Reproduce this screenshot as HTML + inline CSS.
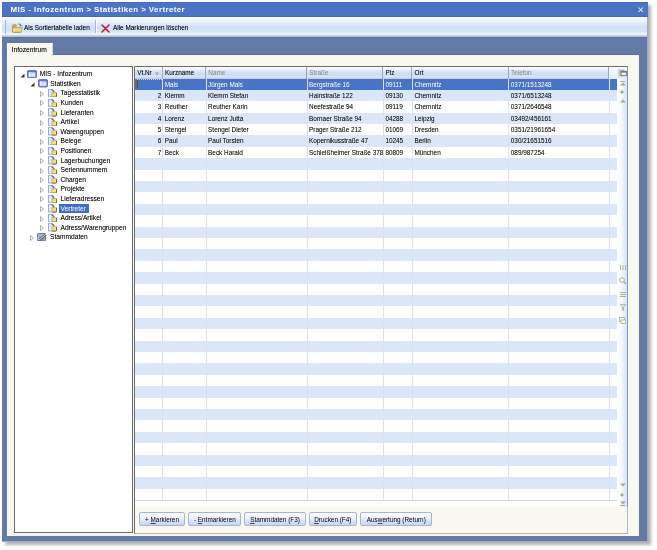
<!DOCTYPE html>
<html><head><meta charset="utf-8"><title>MIS</title>
<style>
*{box-sizing:border-box;margin:0;padding:0}
html,body{width:657px;height:550px;overflow:hidden;background:#fff}
body{position:relative;font-family:"Liberation Sans",sans-serif;font-size:6.4px;color:#000}
#L{position:absolute;left:0;top:0;width:657px;height:550px;will-change:transform}
.t{text-shadow:0 0 0.2px rgba(0,0,0,.3)}
.t.w{text-shadow:none}
.t.g{text-shadow:none}
.a{position:absolute}
.t{position:absolute;white-space:nowrap;line-height:10px}
#win{left:2px;top:2px;width:646px;height:540px;background:#627aa5;border-right:1px solid #9aaccb;border-bottom:1px solid #9aaccb;box-shadow:3px 3px 3px 0px rgba(60,60,60,.4)}
#title{left:2px;top:2px;width:646px;height:15px;background:linear-gradient(#3f66b4 0,#4a74c6 1.2px,#4a74c6 13.5px,#3e64b0 15px)}
#tbar{left:2px;top:17px;width:645px;height:20.3px;background:linear-gradient(#ffffff 0px,#f3f8fe 2px,#e6f0fc 5px,#cfe0f8 10px,#d6e5f9 15px,#f2f8fe 17.3px,#bccbda 18.8px,#b2c1d2 19.6px,#5b6f99 20.3px)}
#tab{left:7px;top:43px;width:46px;height:13px;background:#f8f8f0;border-top:1px solid #fff;border-left:1px solid #fff;border-right:1px solid #c9d3e6}
#panel{left:7px;top:55px;width:632px;height:481px;background:#f7f8f0;border-left:1px solid #fbfdff}
#tree{left:14px;top:66px;width:119px;height:467px;background:#fff;border:1px solid #6b6b6b}
#grid{left:134px;top:66px;width:494px;height:468px;background:#f8f8f0;border-left:1px solid #6b6b6b;border-top:1px solid #6b6b6b;border-right:1px solid #a9b8d2;border-bottom:1px solid #b5b5b5}
.hdr{position:absolute;top:67px;height:12px;background:linear-gradient(#ffffff 0px,#eef5fe 2px,#d2e2f8 5px,#c9dcf6 8px,#dbe7f8 9.5px,#f4f8fe 10px,#aebdd4 11px,#d6e4f8 12px);border-right:1px solid #9eabbf}
.row{position:absolute;left:135px;width:482px}
.vl{position:absolute;top:78px;width:1px;background:#d8e2f4}
.btn{position:absolute;top:512.2px;height:14.3px;border:1px solid #a3b6d3;border-radius:2px;background:linear-gradient(#ffffff 0%,#eef4fd 35%,#d6e4f8 70%,#c2d5f2 100%);text-align:center;line-height:14.3px;color:#000}
.btn u{text-decoration:underline;text-decoration-thickness:0.7px;text-underline-offset:0.8px;text-decoration-color:#444}
</style></head><body><div id="L">
<div id="win" class="a"></div>
<div id="title" class="a"></div>
<div class="t w" style="left:10.5px;top:4px;font-weight:bold;font-size:7.9px;letter-spacing:0.42px;color:#fff;line-height:11px">MIS - Infozentrum &gt; Statistiken &gt; Vertreter</div>
<svg class="a" style="left:638px;top:6.8px" width="6" height="6" viewBox="0 0 6 6"><path d="M0.5 0.5 L5 5 M5 0.5 L0.5 5" stroke="#eef4ff" stroke-width="1.05"/></svg>
<div id="tbar" class="a"></div>

<div class="a" style="left:5px;top:20px;width:1px;height:14px;background:#a9b9d4"></div>
<svg class="a" style="left:11.5px;top:22.5px" width="11" height="10" viewBox="0 0 11 10"><path d="M0.6 2.5 Q0.6 1.8 1.3 1.8 H4 L4.8 2.6 H8.5 V9.2 H1.3 Q0.6 9.2 0.6 8.5 Z" fill="#d9b548" stroke="#8c7a3a" stroke-width="0.6"/><path d="M3.5 3.2 L6 1.5 L7.5 0.4 L9.8 2.6 L9.8 5 L6 5 Z" fill="#eef0f2" stroke="#7e8488" stroke-width="0.5"/><path d="M7.5 0.4 L9.8 2.6 L7.5 3.4 Z" fill="#5e6a6e"/><path d="M0.8 4.6 H9.6 Q10.2 4.6 10 5.2 L9.2 9.2 H1.2 Q0.6 9.2 0.6 8.5 Z" fill="#f1d77a" stroke="#9a8540" stroke-width="0.6"/><rect x="1.5" y="5.3" width="1.2" height="3.3" fill="#fff2b0" opacity=".8"/></svg>
<div class="t" style="left:24px;top:23px">Als Sortiertabelle laden</div>
<div class="a" style="left:95px;top:20px;width:1px;height:13px;background:#a7b7d0"></div>
<div class="a" style="left:96px;top:20px;width:1px;height:13px;background:#fff"></div>
<svg class="a" style="left:101px;top:24px" width="9" height="9" viewBox="0 0 9 9"><path d="M1 1 L8 8 M8 1 L1 8" stroke="#c41e3a" stroke-width="1.6" stroke-linecap="round"/></svg>
<div class="t" style="left:113px;top:23px">Alle Markierungen löschen</div>
<div class="a" style="left:2px;top:37.3px;width:645px;height:1px;background:#5f7299"></div>
<div class="a" style="left:7px;top:54px;width:632px;height:1px;background:#5b6e98"></div>
<div id="panel" class="a"></div>
<div id="tab" class="a"></div>
<div class="t" style="left:11.7px;top:44.6px;font-size:6.65px">Infozentrum</div>
<div id="tree" class="a"></div>
<svg class="a" style="left:20px;top:72.5px" width="5" height="5" viewBox="0 0 5 5"><path d="M4.5 0.5 L4.5 4.5 L0.5 4.5 Z" fill="#333"/></svg>
<svg class="a" style="left:27px;top:69.8px" width="10" height="8.5" viewBox="0 0 10 8.5"><defs><linearGradient id="rg0" x1="0" y1="0" x2="0" y2="1"><stop offset="0" stop-color="#5a6fd0"/><stop offset="1" stop-color="#7f9be0"/></linearGradient></defs><rect x="0.4" y="0.4" width="9.2" height="7.6" rx="1.6" fill="url(#rg0)" stroke="#4a5ea8" stroke-width="0.8"/><rect x="1.6" y="2.2" width="6.8" height="4.6" rx="0.6" fill="#c8d8f6"/><path d="M2.6 2.4 V6 H4.2" stroke="#fff" stroke-width="1" fill="none"/><path d="M5 4.6 Q6.5 3.4 8 4.2 V6.4 H5 Z" fill="#e6eefc"/></svg>
<div class="t" style="left:39.7px;top:69.1px;font-size:6.62px">MIS - Infozentrum</div>
<svg class="a" style="left:30.3px;top:82.1px" width="5" height="5" viewBox="0 0 5 5"><path d="M4.5 0.5 L4.5 4.5 L0.5 4.5 Z" fill="#333"/></svg>
<svg class="a" style="left:37.5px;top:79.4px" width="10" height="8.5" viewBox="0 0 10 8.5"><defs><linearGradient id="rg1" x1="0" y1="0" x2="0" y2="1"><stop offset="0" stop-color="#5a6fd0"/><stop offset="1" stop-color="#7f9be0"/></linearGradient></defs><rect x="0.4" y="0.4" width="9.2" height="7.6" rx="1.6" fill="url(#rg1)" stroke="#4a5ea8" stroke-width="0.8"/><rect x="1.6" y="2.2" width="6.8" height="4.6" rx="0.6" fill="#c8d8f6"/><path d="M2.6 2.4 V6 H4.2" stroke="#fff" stroke-width="1" fill="none"/><path d="M5 4.6 Q6.5 3.4 8 4.2 V6.4 H5 Z" fill="#e6eefc"/></svg>
<div class="t" style="left:50.2px;top:78.7px;font-size:6.62px">Statistiken</div>
<svg class="a" style="left:40.2px;top:90.7px" width="4" height="6" viewBox="0 0 4 6"><path d="M0.5 0.5 L3.5 3 L0.5 5.5 Z" fill="#fff" stroke="#9a9a9a" stroke-width="0.8"/></svg>
<svg class="a" style="left:48px;top:88.9px" width="9" height="8.5" viewBox="0 0 9 8.5"><path d="M0.5 0.4 H4 L6 2.4 V8 H0.5 Z" fill="#e4edfb" stroke="#8798c2" stroke-width="0.8"/><path d="M3.7 0.5 L6.1 2.9" stroke="#4d5b78" stroke-width="1.1"/><path d="M3.9 3.6 H8.5 V7.4 Q8.5 8.1 7.8 8.1 H3.9 Z" fill="#f1df88" stroke="#a8943e" stroke-width="0.6"/><path d="M8.5 4 V7.5 Q8.5 8.1 7.9 8.1 H4.6" stroke="#6a5c22" stroke-width="0.8" fill="none"/></svg>
<div class="t" style="left:60.5px;top:88.3px;font-size:6.62px">Tagesstatistik</div>
<svg class="a" style="left:40.2px;top:100.3px" width="4" height="6" viewBox="0 0 4 6"><path d="M0.5 0.5 L3.5 3 L0.5 5.5 Z" fill="#fff" stroke="#9a9a9a" stroke-width="0.8"/></svg>
<svg class="a" style="left:48px;top:98.5px" width="9" height="8.5" viewBox="0 0 9 8.5"><path d="M0.5 0.4 H4 L6 2.4 V8 H0.5 Z" fill="#e4edfb" stroke="#8798c2" stroke-width="0.8"/><path d="M3.7 0.5 L6.1 2.9" stroke="#4d5b78" stroke-width="1.1"/><path d="M3.9 3.6 H8.5 V7.4 Q8.5 8.1 7.8 8.1 H3.9 Z" fill="#f1df88" stroke="#a8943e" stroke-width="0.6"/><path d="M8.5 4 V7.5 Q8.5 8.1 7.9 8.1 H4.6" stroke="#6a5c22" stroke-width="0.8" fill="none"/></svg>
<div class="t" style="left:60.5px;top:97.9px;font-size:6.62px">Kunden</div>
<svg class="a" style="left:40.2px;top:109.9px" width="4" height="6" viewBox="0 0 4 6"><path d="M0.5 0.5 L3.5 3 L0.5 5.5 Z" fill="#fff" stroke="#9a9a9a" stroke-width="0.8"/></svg>
<svg class="a" style="left:48px;top:108.1px" width="9" height="8.5" viewBox="0 0 9 8.5"><path d="M0.5 0.4 H4 L6 2.4 V8 H0.5 Z" fill="#e4edfb" stroke="#8798c2" stroke-width="0.8"/><path d="M3.7 0.5 L6.1 2.9" stroke="#4d5b78" stroke-width="1.1"/><path d="M3.9 3.6 H8.5 V7.4 Q8.5 8.1 7.8 8.1 H3.9 Z" fill="#f1df88" stroke="#a8943e" stroke-width="0.6"/><path d="M8.5 4 V7.5 Q8.5 8.1 7.9 8.1 H4.6" stroke="#6a5c22" stroke-width="0.8" fill="none"/></svg>
<div class="t" style="left:60.5px;top:107.5px;font-size:6.62px">Lieferanten</div>
<svg class="a" style="left:40.2px;top:119.5px" width="4" height="6" viewBox="0 0 4 6"><path d="M0.5 0.5 L3.5 3 L0.5 5.5 Z" fill="#fff" stroke="#9a9a9a" stroke-width="0.8"/></svg>
<svg class="a" style="left:48px;top:117.7px" width="9" height="8.5" viewBox="0 0 9 8.5"><path d="M0.5 0.4 H4 L6 2.4 V8 H0.5 Z" fill="#e4edfb" stroke="#8798c2" stroke-width="0.8"/><path d="M3.7 0.5 L6.1 2.9" stroke="#4d5b78" stroke-width="1.1"/><path d="M3.9 3.6 H8.5 V7.4 Q8.5 8.1 7.8 8.1 H3.9 Z" fill="#f1df88" stroke="#a8943e" stroke-width="0.6"/><path d="M8.5 4 V7.5 Q8.5 8.1 7.9 8.1 H4.6" stroke="#6a5c22" stroke-width="0.8" fill="none"/></svg>
<div class="t" style="left:60.5px;top:117.1px;font-size:6.62px">Artikel</div>
<svg class="a" style="left:40.2px;top:129.1px" width="4" height="6" viewBox="0 0 4 6"><path d="M0.5 0.5 L3.5 3 L0.5 5.5 Z" fill="#fff" stroke="#9a9a9a" stroke-width="0.8"/></svg>
<svg class="a" style="left:48px;top:127.3px" width="9" height="8.5" viewBox="0 0 9 8.5"><path d="M0.5 0.4 H4 L6 2.4 V8 H0.5 Z" fill="#e4edfb" stroke="#8798c2" stroke-width="0.8"/><path d="M3.7 0.5 L6.1 2.9" stroke="#4d5b78" stroke-width="1.1"/><path d="M3.9 3.6 H8.5 V7.4 Q8.5 8.1 7.8 8.1 H3.9 Z" fill="#f1df88" stroke="#a8943e" stroke-width="0.6"/><path d="M8.5 4 V7.5 Q8.5 8.1 7.9 8.1 H4.6" stroke="#6a5c22" stroke-width="0.8" fill="none"/></svg>
<div class="t" style="left:60.5px;top:126.7px;font-size:6.62px">Warengruppen</div>
<svg class="a" style="left:40.2px;top:138.7px" width="4" height="6" viewBox="0 0 4 6"><path d="M0.5 0.5 L3.5 3 L0.5 5.5 Z" fill="#fff" stroke="#9a9a9a" stroke-width="0.8"/></svg>
<svg class="a" style="left:48px;top:136.9px" width="9" height="8.5" viewBox="0 0 9 8.5"><path d="M0.5 0.4 H4 L6 2.4 V8 H0.5 Z" fill="#e4edfb" stroke="#8798c2" stroke-width="0.8"/><path d="M3.7 0.5 L6.1 2.9" stroke="#4d5b78" stroke-width="1.1"/><path d="M3.9 3.6 H8.5 V7.4 Q8.5 8.1 7.8 8.1 H3.9 Z" fill="#f1df88" stroke="#a8943e" stroke-width="0.6"/><path d="M8.5 4 V7.5 Q8.5 8.1 7.9 8.1 H4.6" stroke="#6a5c22" stroke-width="0.8" fill="none"/></svg>
<div class="t" style="left:60.5px;top:136.3px;font-size:6.62px">Belege</div>
<svg class="a" style="left:40.2px;top:148.3px" width="4" height="6" viewBox="0 0 4 6"><path d="M0.5 0.5 L3.5 3 L0.5 5.5 Z" fill="#fff" stroke="#9a9a9a" stroke-width="0.8"/></svg>
<svg class="a" style="left:48px;top:146.5px" width="9" height="8.5" viewBox="0 0 9 8.5"><path d="M0.5 0.4 H4 L6 2.4 V8 H0.5 Z" fill="#e4edfb" stroke="#8798c2" stroke-width="0.8"/><path d="M3.7 0.5 L6.1 2.9" stroke="#4d5b78" stroke-width="1.1"/><path d="M3.9 3.6 H8.5 V7.4 Q8.5 8.1 7.8 8.1 H3.9 Z" fill="#f1df88" stroke="#a8943e" stroke-width="0.6"/><path d="M8.5 4 V7.5 Q8.5 8.1 7.9 8.1 H4.6" stroke="#6a5c22" stroke-width="0.8" fill="none"/></svg>
<div class="t" style="left:60.5px;top:145.9px;font-size:6.62px">Positionen</div>
<svg class="a" style="left:40.2px;top:157.9px" width="4" height="6" viewBox="0 0 4 6"><path d="M0.5 0.5 L3.5 3 L0.5 5.5 Z" fill="#fff" stroke="#9a9a9a" stroke-width="0.8"/></svg>
<svg class="a" style="left:48px;top:156.1px" width="9" height="8.5" viewBox="0 0 9 8.5"><path d="M0.5 0.4 H4 L6 2.4 V8 H0.5 Z" fill="#e4edfb" stroke="#8798c2" stroke-width="0.8"/><path d="M3.7 0.5 L6.1 2.9" stroke="#4d5b78" stroke-width="1.1"/><path d="M3.9 3.6 H8.5 V7.4 Q8.5 8.1 7.8 8.1 H3.9 Z" fill="#f1df88" stroke="#a8943e" stroke-width="0.6"/><path d="M8.5 4 V7.5 Q8.5 8.1 7.9 8.1 H4.6" stroke="#6a5c22" stroke-width="0.8" fill="none"/></svg>
<div class="t" style="left:60.5px;top:155.5px;font-size:6.62px">Lagerbuchungen</div>
<svg class="a" style="left:40.2px;top:167.5px" width="4" height="6" viewBox="0 0 4 6"><path d="M0.5 0.5 L3.5 3 L0.5 5.5 Z" fill="#fff" stroke="#9a9a9a" stroke-width="0.8"/></svg>
<svg class="a" style="left:48px;top:165.7px" width="9" height="8.5" viewBox="0 0 9 8.5"><path d="M0.5 0.4 H4 L6 2.4 V8 H0.5 Z" fill="#e4edfb" stroke="#8798c2" stroke-width="0.8"/><path d="M3.7 0.5 L6.1 2.9" stroke="#4d5b78" stroke-width="1.1"/><path d="M3.9 3.6 H8.5 V7.4 Q8.5 8.1 7.8 8.1 H3.9 Z" fill="#f1df88" stroke="#a8943e" stroke-width="0.6"/><path d="M8.5 4 V7.5 Q8.5 8.1 7.9 8.1 H4.6" stroke="#6a5c22" stroke-width="0.8" fill="none"/></svg>
<div class="t" style="left:60.5px;top:165.1px;font-size:6.62px">Seriennummern</div>
<svg class="a" style="left:40.2px;top:177.1px" width="4" height="6" viewBox="0 0 4 6"><path d="M0.5 0.5 L3.5 3 L0.5 5.5 Z" fill="#fff" stroke="#9a9a9a" stroke-width="0.8"/></svg>
<svg class="a" style="left:48px;top:175.3px" width="9" height="8.5" viewBox="0 0 9 8.5"><path d="M0.5 0.4 H4 L6 2.4 V8 H0.5 Z" fill="#e4edfb" stroke="#8798c2" stroke-width="0.8"/><path d="M3.7 0.5 L6.1 2.9" stroke="#4d5b78" stroke-width="1.1"/><path d="M3.9 3.6 H8.5 V7.4 Q8.5 8.1 7.8 8.1 H3.9 Z" fill="#f1df88" stroke="#a8943e" stroke-width="0.6"/><path d="M8.5 4 V7.5 Q8.5 8.1 7.9 8.1 H4.6" stroke="#6a5c22" stroke-width="0.8" fill="none"/></svg>
<div class="t" style="left:60.5px;top:174.7px;font-size:6.62px">Chargen</div>
<svg class="a" style="left:40.2px;top:186.7px" width="4" height="6" viewBox="0 0 4 6"><path d="M0.5 0.5 L3.5 3 L0.5 5.5 Z" fill="#fff" stroke="#9a9a9a" stroke-width="0.8"/></svg>
<svg class="a" style="left:48px;top:184.9px" width="9" height="8.5" viewBox="0 0 9 8.5"><path d="M0.5 0.4 H4 L6 2.4 V8 H0.5 Z" fill="#e4edfb" stroke="#8798c2" stroke-width="0.8"/><path d="M3.7 0.5 L6.1 2.9" stroke="#4d5b78" stroke-width="1.1"/><path d="M3.9 3.6 H8.5 V7.4 Q8.5 8.1 7.8 8.1 H3.9 Z" fill="#f1df88" stroke="#a8943e" stroke-width="0.6"/><path d="M8.5 4 V7.5 Q8.5 8.1 7.9 8.1 H4.6" stroke="#6a5c22" stroke-width="0.8" fill="none"/></svg>
<div class="t" style="left:60.5px;top:184.3px;font-size:6.62px">Projekte</div>
<svg class="a" style="left:40.2px;top:196.3px" width="4" height="6" viewBox="0 0 4 6"><path d="M0.5 0.5 L3.5 3 L0.5 5.5 Z" fill="#fff" stroke="#9a9a9a" stroke-width="0.8"/></svg>
<svg class="a" style="left:48px;top:194.5px" width="9" height="8.5" viewBox="0 0 9 8.5"><path d="M0.5 0.4 H4 L6 2.4 V8 H0.5 Z" fill="#e4edfb" stroke="#8798c2" stroke-width="0.8"/><path d="M3.7 0.5 L6.1 2.9" stroke="#4d5b78" stroke-width="1.1"/><path d="M3.9 3.6 H8.5 V7.4 Q8.5 8.1 7.8 8.1 H3.9 Z" fill="#f1df88" stroke="#a8943e" stroke-width="0.6"/><path d="M8.5 4 V7.5 Q8.5 8.1 7.9 8.1 H4.6" stroke="#6a5c22" stroke-width="0.8" fill="none"/></svg>
<div class="t" style="left:60.5px;top:193.9px;font-size:6.62px">Lieferadressen</div>
<svg class="a" style="left:40.2px;top:205.9px" width="4" height="6" viewBox="0 0 4 6"><path d="M0.5 0.5 L3.5 3 L0.5 5.5 Z" fill="#fff" stroke="#9a9a9a" stroke-width="0.8"/></svg>
<svg class="a" style="left:48px;top:204.1px" width="9" height="8.5" viewBox="0 0 9 8.5"><path d="M0.5 0.4 H4 L6 2.4 V8 H0.5 Z" fill="#e4edfb" stroke="#8798c2" stroke-width="0.8"/><path d="M3.7 0.5 L6.1 2.9" stroke="#4d5b78" stroke-width="1.1"/><path d="M3.9 3.6 H8.5 V7.4 Q8.5 8.1 7.8 8.1 H3.9 Z" fill="#f1df88" stroke="#a8943e" stroke-width="0.6"/><path d="M8.5 4 V7.5 Q8.5 8.1 7.9 8.1 H4.6" stroke="#6a5c22" stroke-width="0.8" fill="none"/></svg>
<div class="a" style="left:58.9px;top:204.3px;width:30px;height:8.5px;background:#3e6cc6"></div>
<div class="t w" style="left:60.5px;top:203.5px;color:#fff;font-size:6.62px">Vertreter</div>
<svg class="a" style="left:40.2px;top:215.5px" width="4" height="6" viewBox="0 0 4 6"><path d="M0.5 0.5 L3.5 3 L0.5 5.5 Z" fill="#fff" stroke="#9a9a9a" stroke-width="0.8"/></svg>
<svg class="a" style="left:48px;top:213.7px" width="9" height="8.5" viewBox="0 0 9 8.5"><path d="M0.5 0.4 H4 L6 2.4 V8 H0.5 Z" fill="#e4edfb" stroke="#8798c2" stroke-width="0.8"/><path d="M3.7 0.5 L6.1 2.9" stroke="#4d5b78" stroke-width="1.1"/><path d="M3.9 3.6 H8.5 V7.4 Q8.5 8.1 7.8 8.1 H3.9 Z" fill="#f1df88" stroke="#a8943e" stroke-width="0.6"/><path d="M8.5 4 V7.5 Q8.5 8.1 7.9 8.1 H4.6" stroke="#6a5c22" stroke-width="0.8" fill="none"/></svg>
<div class="t" style="left:60.5px;top:213.1px;font-size:6.62px">Adress/Artikel</div>
<svg class="a" style="left:40.2px;top:225.1px" width="4" height="6" viewBox="0 0 4 6"><path d="M0.5 0.5 L3.5 3 L0.5 5.5 Z" fill="#fff" stroke="#9a9a9a" stroke-width="0.8"/></svg>
<svg class="a" style="left:48px;top:223.3px" width="9" height="8.5" viewBox="0 0 9 8.5"><path d="M0.5 0.4 H4 L6 2.4 V8 H0.5 Z" fill="#e4edfb" stroke="#8798c2" stroke-width="0.8"/><path d="M3.7 0.5 L6.1 2.9" stroke="#4d5b78" stroke-width="1.1"/><path d="M3.9 3.6 H8.5 V7.4 Q8.5 8.1 7.8 8.1 H3.9 Z" fill="#f1df88" stroke="#a8943e" stroke-width="0.6"/><path d="M8.5 4 V7.5 Q8.5 8.1 7.9 8.1 H4.6" stroke="#6a5c22" stroke-width="0.8" fill="none"/></svg>
<div class="t" style="left:60.5px;top:222.7px;font-size:6.62px">Adress/Warengruppen</div>
<svg class="a" style="left:30px;top:234.7px" width="4" height="6" viewBox="0 0 4 6"><path d="M0.5 0.5 L3.5 3 L0.5 5.5 Z" fill="#fff" stroke="#9a9a9a" stroke-width="0.8"/></svg>
<svg class="a" style="left:37.3px;top:232.8px" width="10" height="8.5" viewBox="0 0 10 8.5"><rect x="0.4" y="0.4" width="8.2" height="7.6" rx="1.2" fill="#8a98dc" stroke="#4e5a90" stroke-width="0.8"/><rect x="1.3" y="1.3" width="6" height="2.5" fill="#a9b6ee"/><path d="M2 7.2 L8.8 1.2" stroke="#3a3a30" stroke-width="2.2"/><path d="M2 7.2 L8.8 1.2" stroke="#d8d890" stroke-width="1.1"/><path d="M1.2 4 V7" stroke="#e8eefc" stroke-width="0.9"/></svg>
<div class="t" style="left:50.1px;top:232.3px;font-size:6.62px">Stammdaten</div>
<div id="grid" class="a"></div>
<div class="row" style="top:78.9px;height:10.8px;background:#4773c9"></div>
<div class="row" style="top:89.7px;height:11.42px;background:#dbe7f9"></div>
<div class="row" style="top:101.1px;height:11.42px;background:#ffffff"></div>
<div class="row" style="top:112.5px;height:11.42px;background:#dbe7f9"></div>
<div class="row" style="top:123.9px;height:11.42px;background:#ffffff"></div>
<div class="row" style="top:135.3px;height:11.42px;background:#dbe7f9"></div>
<div class="row" style="top:146.7px;height:11.42px;background:#ffffff"></div>
<div class="row" style="top:158.1px;height:11.42px;background:#dbe7f9"></div>
<div class="row" style="top:169.5px;height:11.42px;background:#ffffff"></div>
<div class="row" style="top:180.9px;height:11.42px;background:#dbe7f9"></div>
<div class="row" style="top:192.3px;height:11.42px;background:#ffffff"></div>
<div class="row" style="top:203.7px;height:11.42px;background:#dbe7f9"></div>
<div class="row" style="top:215.1px;height:11.42px;background:#ffffff"></div>
<div class="row" style="top:226.5px;height:11.42px;background:#dbe7f9"></div>
<div class="row" style="top:237.9px;height:11.42px;background:#ffffff"></div>
<div class="row" style="top:249.3px;height:11.42px;background:#dbe7f9"></div>
<div class="row" style="top:260.7px;height:11.42px;background:#ffffff"></div>
<div class="row" style="top:272.1px;height:11.42px;background:#dbe7f9"></div>
<div class="row" style="top:283.5px;height:11.42px;background:#ffffff"></div>
<div class="row" style="top:294.9px;height:11.42px;background:#dbe7f9"></div>
<div class="row" style="top:306.3px;height:11.42px;background:#ffffff"></div>
<div class="row" style="top:317.7px;height:11.42px;background:#dbe7f9"></div>
<div class="row" style="top:329.1px;height:11.42px;background:#ffffff"></div>
<div class="row" style="top:340.5px;height:11.42px;background:#dbe7f9"></div>
<div class="row" style="top:351.9px;height:11.42px;background:#ffffff"></div>
<div class="row" style="top:363.3px;height:11.42px;background:#dbe7f9"></div>
<div class="row" style="top:374.7px;height:11.42px;background:#ffffff"></div>
<div class="row" style="top:386.1px;height:11.42px;background:#dbe7f9"></div>
<div class="row" style="top:397.5px;height:11.42px;background:#ffffff"></div>
<div class="row" style="top:408.9px;height:11.42px;background:#dbe7f9"></div>
<div class="row" style="top:420.3px;height:11.42px;background:#ffffff"></div>
<div class="row" style="top:431.7px;height:11.42px;background:#dbe7f9"></div>
<div class="row" style="top:443.1px;height:11.42px;background:#ffffff"></div>
<div class="row" style="top:454.5px;height:11.42px;background:#dbe7f9"></div>
<div class="row" style="top:465.9px;height:11.42px;background:#ffffff"></div>
<div class="row" style="top:477.3px;height:11.42px;background:#dbe7f9"></div>
<div class="row" style="top:488.7px;height:11.42px;background:#ffffff"></div>
<div class="vl" style="left:162.3px;height:422.1px"></div>
<div class="vl" style="left:205.6px;height:422.1px"></div>
<div class="vl" style="left:306.6px;height:422.1px"></div>
<div class="vl" style="left:382.9px;height:422.1px"></div>
<div class="vl" style="left:411.9px;height:422.1px"></div>
<div class="vl" style="left:508.3px;height:422.1px"></div>
<div class="vl" style="left:608.5px;height:422.1px"></div>
<div class="a" style="left:617px;top:67px;width:10px;height:440px;background:linear-gradient(90deg,#fdfeff 0%,#f6f9fe 40%,#d4e2f6 100%)"></div>
<div class="a" style="left:626.5px;top:67px;width:1px;height:440px;background:#8098c0"></div>
<div class="hdr" style="left:135px;width:27.8px"></div>
<div class="t" style="left:137.2px;top:67.7px;color:#111">Vt.Nr</div>
<div class="hdr" style="left:162.8px;width:43.3px"></div>
<div class="t" style="left:165px;top:67.7px;color:#111">Kurzname</div>
<div class="hdr" style="left:206.1px;width:101px"></div>
<div class="t g" style="left:208.3px;top:67.7px;color:#888">Name</div>
<div class="hdr" style="left:307.1px;width:76.3px"></div>
<div class="t g" style="left:309.3px;top:67.7px;color:#888">Straße</div>
<div class="hdr" style="left:383.4px;width:29px"></div>
<div class="t" style="left:385.6px;top:67.7px;color:#111">Plz</div>
<div class="hdr" style="left:412.4px;width:96.4px"></div>
<div class="t" style="left:414.6px;top:67.7px;color:#111">Ort</div>
<div class="hdr" style="left:508.8px;width:100.2px"></div>
<div class="t g" style="left:511px;top:67.7px;color:#888">Telefon</div>
<div class="hdr" style="left:609px;width:17.5px;border-right:none;background:linear-gradient(#fbfdff,#e2ebf8)"></div>
<svg class="a" style="left:154.5px;top:71.5px" width="4" height="4" viewBox="0 0 4 4"><path d="M0 0.5 H4 L2 3.5 Z" fill="#9aa6b8"/></svg>
<svg class="a" style="left:617.5px;top:69px" width="9" height="8" viewBox="0 0 9 8"><rect x="0.3" y="0.3" width="6" height="7" fill="#c4c8ce"/><rect x="3" y="2.3" width="5.6" height="4.4" fill="#f4f0ee" stroke="#6e737a" stroke-width="0.9"/><rect x="3" y="2.3" width="5.6" height="1.3" fill="#6e737a"/></svg>
<div class="a" style="left:137px;top:79.2px;width:25px;height:1px;border-top:1px dotted #c9d6f0"></div>
<div class="a" style="left:136px;top:80px;width:2px;height:8px;background:linear-gradient(90deg,#8a7a40,#4a4020)"></div>
<div class="t w" style="left:164.8px;top:79.9px;color:#fff">Mals</div>
<div class="t w" style="left:208.1px;top:79.9px;color:#fff">Jürgen Mals</div>
<div class="t w" style="left:309.1px;top:79.9px;color:#fff">Bergstraße 16</div>
<div class="t w" style="left:385.4px;top:79.9px;color:#fff">09111</div>
<div class="t w" style="left:414.4px;top:79.9px;color:#fff">Chemnitz</div>
<div class="t w" style="left:510.8px;top:79.9px;color:#fff">0371/1513248</div>
<div class="t" style="left:135px;width:26.3px;text-align:right;top:90.7px;color:#111">2</div>
<div class="t" style="left:164.8px;top:90.7px;color:#111">Klemm</div>
<div class="t" style="left:208.1px;top:90.7px;color:#111">Klemm Stefan</div>
<div class="t" style="left:309.1px;top:90.7px;color:#111">Hainstraße 122</div>
<div class="t" style="left:385.4px;top:90.7px;color:#111">09130</div>
<div class="t" style="left:414.4px;top:90.7px;color:#111">Chemnitz</div>
<div class="t" style="left:510.8px;top:90.7px;color:#111">0371/6513248</div>
<div class="t" style="left:135px;width:26.3px;text-align:right;top:102.1px;color:#111">3</div>
<div class="t" style="left:164.8px;top:102.1px;color:#111">Reuther</div>
<div class="t" style="left:208.1px;top:102.1px;color:#111">Reuther Karin</div>
<div class="t" style="left:309.1px;top:102.1px;color:#111">Neefestraße 94</div>
<div class="t" style="left:385.4px;top:102.1px;color:#111">09119</div>
<div class="t" style="left:414.4px;top:102.1px;color:#111">Chemnitz</div>
<div class="t" style="left:510.8px;top:102.1px;color:#111">0371/2646548</div>
<div class="t" style="left:135px;width:26.3px;text-align:right;top:113.5px;color:#111">4</div>
<div class="t" style="left:164.8px;top:113.5px;color:#111">Lorenz</div>
<div class="t" style="left:208.1px;top:113.5px;color:#111">Lorenz Jutta</div>
<div class="t" style="left:309.1px;top:113.5px;color:#111">Bornaer Straße 94</div>
<div class="t" style="left:385.4px;top:113.5px;color:#111">04288</div>
<div class="t" style="left:414.4px;top:113.5px;color:#111">Leipzig</div>
<div class="t" style="left:510.8px;top:113.5px;color:#111">03492/456161</div>
<div class="t" style="left:135px;width:26.3px;text-align:right;top:124.9px;color:#111">5</div>
<div class="t" style="left:164.8px;top:124.9px;color:#111">Stengel</div>
<div class="t" style="left:208.1px;top:124.9px;color:#111">Stengel Dieter</div>
<div class="t" style="left:309.1px;top:124.9px;color:#111">Prager Straße 212</div>
<div class="t" style="left:385.4px;top:124.9px;color:#111">01069</div>
<div class="t" style="left:414.4px;top:124.9px;color:#111">Dresden</div>
<div class="t" style="left:510.8px;top:124.9px;color:#111">0351/21961654</div>
<div class="t" style="left:135px;width:26.3px;text-align:right;top:136.3px;color:#111">6</div>
<div class="t" style="left:164.8px;top:136.3px;color:#111">Paul</div>
<div class="t" style="left:208.1px;top:136.3px;color:#111">Paul Torsten</div>
<div class="t" style="left:309.1px;top:136.3px;color:#111">Kopernikusstraße 47</div>
<div class="t" style="left:385.4px;top:136.3px;color:#111">10245</div>
<div class="t" style="left:414.4px;top:136.3px;color:#111">Berlin</div>
<div class="t" style="left:510.8px;top:136.3px;color:#111">030/21651516</div>
<div class="t" style="left:135px;width:26.3px;text-align:right;top:147.7px;color:#111">7</div>
<div class="t" style="left:164.8px;top:147.7px;color:#111">Beck</div>
<div class="t" style="left:208.1px;top:147.7px;color:#111">Beck Harald</div>
<div class="t" style="left:309.1px;top:147.7px;color:#111">Schleißheimer Straße 378</div>
<div class="t" style="left:385.4px;top:147.7px;color:#111">80809</div>
<div class="t" style="left:414.4px;top:147.7px;color:#111">München</div>
<div class="t" style="left:510.8px;top:147.7px;color:#111">089/987254</div>
<div class="a" style="left:620px;top:81px;width:4.6px;height:1px;background:#a4ad88"></div>
<svg class="a" style="left:619.5px;top:82.2px" width="6" height="4" viewBox="0 0 6 4"><path d="M0 3.5 L3 0.5 L6 3.5 Z" fill="#a4ad88"/></svg>
<svg class="a" style="left:620.2px;top:90px" width="4" height="4" viewBox="0 0 4 4"><path d="M2 0 L4 2 L2 4 L0 2 Z" fill="#a4ad88"/></svg>
<svg class="a" style="left:619.5px;top:99.4px" width="6" height="4" viewBox="0 0 6 4"><path d="M0 3.5 L3 0.5 L6 3.5 Z" fill="#a4ad88"/></svg>
<svg class="a" style="left:619.5px;top:265px" width="6" height="5" viewBox="0 0 6 5"><path d="M0.5 0 V5 M3 0 V5 M5.5 0 V5" stroke="#a4ad88" stroke-width="0.9"/></svg>
<svg class="a" style="left:618.8px;top:277.3px" width="7.5" height="7.5" viewBox="0 0 7.5 7.5"><circle cx="3" cy="3" r="2.4" fill="#f4f6ee" stroke="#a4ad88" stroke-width="0.9"/><path d="M4.7 4.7 L7 7" stroke="#a4ad88" stroke-width="1.3"/></svg>
<svg class="a" style="left:619.5px;top:291.5px" width="6" height="5" viewBox="0 0 6 5"><path d="M0 0.5 H6 M0 2.5 H6 M0 4.5 H6" stroke="#a4ad88" stroke-width="0.9"/></svg>
<svg class="a" style="left:619.5px;top:304px" width="6" height="7" viewBox="0 0 6 7"><path d="M0 0.5 L6 0.5 L3.5 3 V6.5 L2.5 6 V3 Z" fill="none" stroke="#a4ad88" stroke-width="0.8"/></svg>
<svg class="a" style="left:619px;top:316.5px" width="7" height="7" viewBox="0 0 7 7"><rect x="0.5" y="0.5" width="5" height="4" fill="none" stroke="#a4ad88" stroke-width="0.8"/><rect x="2" y="3" width="4.5" height="3.5" fill="#fff" stroke="#a4ad88" stroke-width="0.8"/></svg>
<svg class="a" style="left:619.5px;top:483.3px" width="6" height="4" viewBox="0 0 6 4"><path d="M0 0.5 L3 3.5 L6 0.5 Z" fill="#a4ad88"/></svg>
<svg class="a" style="left:620.2px;top:492.6px" width="4" height="4" viewBox="0 0 4 4"><path d="M2 0 L4 2 L2 4 L0 2 Z" fill="#a4ad88"/></svg>
<svg class="a" style="left:619.5px;top:501.1px" width="6" height="4" viewBox="0 0 6 4"><path d="M0 0.5 L3 3.5 L6 0.5 Z" fill="#a4ad88"/></svg>
<div class="a" style="left:620px;top:505.2px;width:4.6px;height:1.2px;background:#a4ad88"></div>
<div class="a" style="left:135px;top:500px;width:482px;height:7px;background:#fdfdfc"></div>
<div class="a" style="left:135px;top:500px;width:482px;height:1px;background:#d0d8e6"></div>
<div class="btn" style="left:138.7px;width:46.6px">+ <u>M</u>arkieren</div>
<div class="btn" style="left:188.3px;width:53.1px">- <u>E</u>ntmarkieren</div>
<div class="btn" style="left:244.3px;width:61.5px"><u>S</u>tammdaten (F3)</div>
<div class="btn" style="left:308.5px;width:48.6px"><u>D</u>rucken (F4)</div>
<div class="btn" style="left:360.1px;width:72.4px">Aus<u>w</u>ertung (Return)</div>
</div></body></html>
